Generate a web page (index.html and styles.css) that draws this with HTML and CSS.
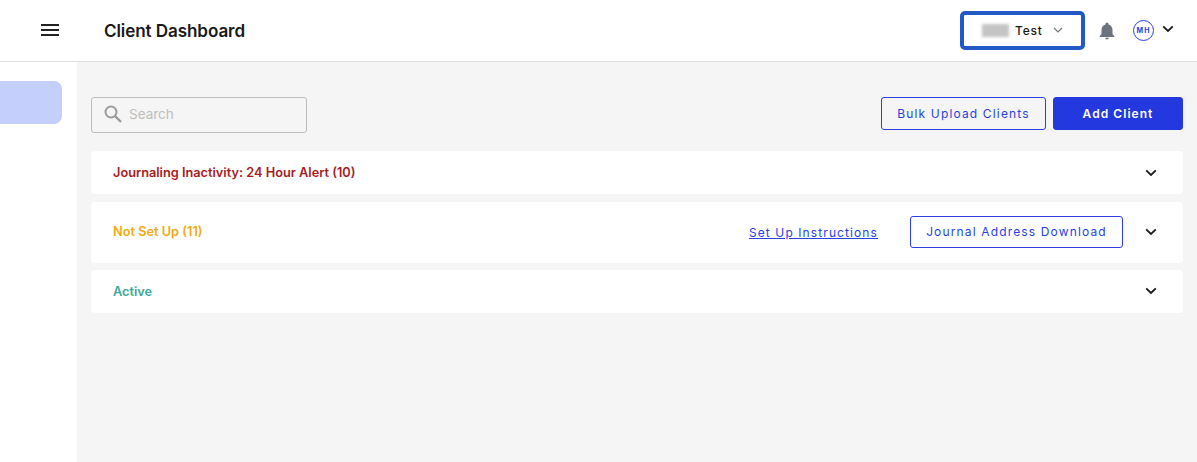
FILE: index.html
```html
<!DOCTYPE html>
<html lang="en">
<head>
<meta charset="utf-8">
<title>Client Dashboard</title>
<link rel="stylesheet" href="styles.css">
</head>
<body>
<header class="topbar">
  <div class="menu-slot">
    <svg class="menu-icon" width="24" height="24" viewBox="0 0 24 24"><path d="M3 18h18v-2H3v2zm0-5h18v-2H3v2zm0-7v2h18V6H3z" fill="#212121"/></svg>
  </div>
  <h1 class="page-title">Client Dashboard</h1>
  <div class="top-actions">
    <div class="org-select">
      <span class="blurred"></span>
      <span class="org-name">Test</span>
      <svg class="org-caret" width="10" height="6" viewBox="0 0 10 6"><path d="M1 1 5 5l4-4" fill="none" stroke="#777" stroke-width="1.200"/></svg>
    </div>
    <svg class="bell" width="16" height="18" viewBox="0 0 16 18"><path d="M8 17.500c1 0 1.800-.8 1.800-1.700H6.200c0 .9.800 1.700 1.800 1.700zM13.500 12.200V8c0-2.700-1.500-4.900-4-5.500V2a1.500 1.500 0 0 0-3 0v.5C4 3.100 2.500 5.300 2.500 8v4.200L.7 14v.9h14.600V14l-1.800-1.800z" fill="#6b7280"/></svg>
    <span class="avatar">MH</span>
    <svg class="chev" width="12" height="8" viewBox="0 0 12 8"><path d="M1.200 1.300 6 6l4.800-4.700" fill="none" stroke="#1a1a1a" stroke-width="1.800"/></svg>
  </div>
</header>
<div class="shell">
  <nav class="sidebar"><div class="nav-active"></div></nav>
  <main class="content">
    <div class="toolbar">
      <label class="search">
        <svg width="20" height="20" viewBox="0 0 20 20"><circle cx="8" cy="8" r="5.500" fill="none" stroke="#9a9a9a" stroke-width="2"/><path d="m12 12 6 6" stroke="#9a9a9a" stroke-width="2.400"/></svg>
        <span class="search-text">Search</span>
      </label>
      <div class="toolbar-buttons">
        <button class="btn btn-outline btn-bulk">Bulk Upload Clients</button>
        <button class="btn btn-solid">Add Client</button>
      </div>
    </div>
    <section class="card card-alert">
      <span class="card-title title-red">Journaling Inactivity: 24 Hour Alert (10)</span>
      <svg class="chev" width="12" height="8" viewBox="0 0 12 8"><path d="M1.200 1.300 6 6l4.800-4.700" fill="none" stroke="#1a1a1a" stroke-width="1.800"/></svg>
    </section>
    <section class="card card-setup">
      <span class="card-title title-amber">Not Set Up (11)</span>
      <a class="link" href="#">Set Up Instructions</a>
      <button class="btn btn-outline btn-journal">Journal Address Download</button>
      <svg class="chev" width="12" height="8" viewBox="0 0 12 8"><path d="M1.200 1.300 6 6l4.800-4.700" fill="none" stroke="#1a1a1a" stroke-width="1.800"/></svg>
    </section>
    <section class="card card-active">
      <span class="card-title title-green">Active</span>
      <svg class="chev" width="12" height="8" viewBox="0 0 12 8"><path d="M1.200 1.300 6 6l4.800-4.700" fill="none" stroke="#1a1a1a" stroke-width="1.800"/></svg>
    </section>
  </main>
</div>
</body>
</html>
```
FILE: styles.css
```css
* { box-sizing: border-box; }
html, body { height: 100%; }
body {
  margin: 0;
  font-family: Inter, "Liberation Sans", sans-serif;
  background: #f5f5f5;
  color: #1a1a1a;
  overflow: hidden;
}
.topbar {
  height: 62px;
  background: #fff;
  border-bottom: 1px solid #e0e0e0;
  display: flex;
  align-items: center;
}
.menu-slot { width: 104px; padding: 0 0 2px 38px; display: flex; }
.page-title { margin: 0; font-size: 17.100px; font-weight: 600; letter-spacing: -.1px; color: #1a1a1a; flex: 1; }
.top-actions { display: flex; align-items: center; padding-right: 23px; }
.org-select {
  width: 125px;
  height: 39px;
  border: 4px solid #2259c7;
  border-radius: 5px;
  display: flex;
  align-items: center;
  padding-left: 18px;
}
.blurred { width: 27px; height: 13px; background: #c4c4c4; filter: blur(1.500px); }
.org-name { margin-left: 6px; font-size: 12px; font-weight: 500; letter-spacing: .8px; }
.org-caret { margin-left: 10px; margin-bottom: 2px; }
.bell { margin-left: 14px; }
.avatar {
  margin-left: 18px;
  width: 21px;
  height: 21px;
  border: 1px solid #2a3fe0;
  border-radius: 50%;
  color: #2a3fe0;
  font-size: 7px;
  font-weight: 700;
  letter-spacing: 1px;
  display: flex;
  align-items: center;
  justify-content: center;
}
.top-actions .chev { margin-left: 8px; margin-bottom: 3px; }
.shell { display: flex; height: 400px; }
.sidebar { width: 77px; background: #fff; padding-top: 19px; }
.nav-active { width: 62px; height: 43px; background: #c5cffb; border-radius: 0 8px 8px 0; }
.content { flex: 1; padding: 35px 14px 0; }
.toolbar { display: flex; justify-content: space-between; align-items: flex-start; margin-bottom: 18px; }
.search {
  width: 216px;
  height: 36px;
  border: 1px solid #bdbdbd;
  border-radius: 3px;
  display: flex;
  align-items: center;
  padding: 0 0 3px 11px;
  gap: 6px;
}
.search-text { color: #bdbdbd; font-size: 13.500px; }
.toolbar-buttons { display: flex; gap: 7px; }
.btn {
  height: 33px;
  border-radius: 3px;
  font-family: inherit;
  font-size: 12px;
  font-weight: 400;
  letter-spacing: 1.150px;
  padding: 0;
  cursor: pointer;
}
.btn-outline { background: #fff; border: 1px solid #2a3fe0; color: #2a3fe0; }
.btn-bulk { width: 165px; background: transparent; }
.btn-solid { width: 130px; background: #2438e0; border: 1px solid #2438e0; color: #fff; font-weight: 600; letter-spacing: 1.050px; }
.btn-journal { width: 213px; height: 32px; margin-left: 32px; }
.card {
  background: #fff;
  border-radius: 4px;
  display: flex;
  align-items: center;
  padding: 0 26px 0 22px;
}
.card-alert { height: 43px; margin-bottom: 8px; }
.card-setup { height: 61px; margin-bottom: 7px; padding-bottom: 2px; }
.card-active { height: 43px; padding-bottom: 2px; }
.card-title { font-size: 12.750px; font-weight: 600; flex: 1; }
.title-red { color: #a51d24; }
.title-amber { color: #f0ab15; }
.title-green { color: #3ea897; }
.card-active .card-title { padding-top: 2px; }
.link { color: #2a3fe0; font-size: 12px; font-weight: 400; letter-spacing: 1.100px; padding-top: 2px; }
.card-setup .chev { margin-left: 22px; }
```
